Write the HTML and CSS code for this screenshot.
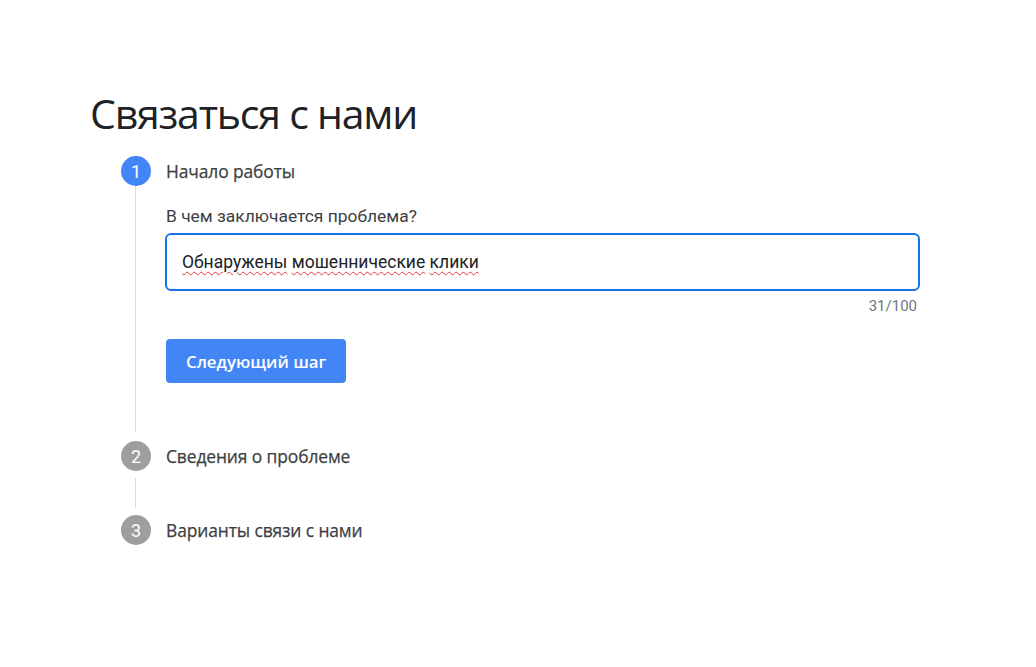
FILE: index.html
```html
<!DOCTYPE html>
<html lang="ru">
<head>
<meta charset="utf-8">
<link rel="stylesheet" href="styles.css">
</head>
<body>
<main class="page">
  <h1 class="title">Связаться с нами</h1>
  <ol class="stepper">
    <li class="step active">
      <div class="step-head">
        <span class="num">1</span>
        <span class="step-title">Начало работы</span>
      </div>
      <div class="step-body">
        <label class="field-label">В чем заключается проблема?</label>
        <div class="input"><span class="value"><span class="sp">Обнаружены</span> <span class="sp">мошеннические</span> <span class="sp">клики</span></span></div>
        <div class="counter">31/100</div>
        <button class="btn">Следующий шаг</button>
      </div>
    </li>
    <li class="step">
      <div class="step-head">
        <span class="num">2</span>
        <span class="step-title">Сведения о проблеме</span>
      </div>
      <div class="step-body short"></div>
    </li>
    <li class="step">
      <div class="step-head">
        <span class="num">3</span>
        <span class="step-title">Варианты связи с нами</span>
      </div>
    </li>
  </ol>
</main>
</body>
</html>
```

FILE: styles.css
```css
* { box-sizing: border-box; }
html, body { margin: 0; background: #fff; }
body { font-family: Roboto, "Noto Sans", sans-serif; color: #3c4043; }
.page { padding: 88px 116px 0 90px; }
.title {
  margin: 0;
  font-family: "Open Sans", Roboto, sans-serif;
  font-weight: 400;
  font-size: 41px;
  line-height: 50px;
  color: #202124;
  letter-spacing: -1.2px;
}
.stepper { list-style: none; margin: 18px 0 0 31px; padding: 0; }
.step-head { display: flex; align-items: center; gap: 15px; height: 30px; }
.num {
  flex: none;
  width: 30px; height: 30px; border-radius: 50%;
  background: #9e9e9e; color: #fff;
  display: flex; align-items: center; justify-content: center;
  font-size: 18px; font-family: Roboto, sans-serif;
}
.active .num { background: #4285f4; }
.step-title {
  font-family: "Open Sans", Roboto, sans-serif;
  font-size: 17.4px; font-weight: 500; color: #3c4043; letter-spacing: -0.1px;
  -webkit-text-stroke: 0.25px #3c4043;
}
.step-body {
  margin: 0 0 0 14px;
  border-left: 1px solid #dadce0;
  padding: 19px 0 49px 30px;
}
.active .step-body { margin-bottom: 9px; }
.step-body.short { padding: 0; height: 30px; margin-top: 7px; margin-bottom: 7px; }
.field-label { display: block; font-size: 17.4px; line-height: 22px; color: #3c4043; }
.input {
  margin-top: 6px;
  height: 58px;
  margin-left: -1px;
  border: 2px solid #1a73e8;
  border-radius: 6px;
  padding: 0 15px;
  display: flex; align-items: center;
  font-size: 17.5px; color: #202124;
}
.value { white-space: pre; }
.sp { text-decoration: underline wavy #e53935; text-decoration-thickness: 1px; text-underline-offset: 3px; }
.counter { text-align: right; font-size: 15px; color: #70757a; margin-top: 7px; padding-right: 3px; line-height: 16px; }
.btn {
  display: block;
  margin-top: 25px;
  height: 44px; padding: 0 20px;
  border: 0; border-radius: 4px;
  background: #4285f4; color: #fff;
  font-family: "Open Sans", Roboto, sans-serif;
  font-size: 16.8px; font-weight: 600;
}
```
